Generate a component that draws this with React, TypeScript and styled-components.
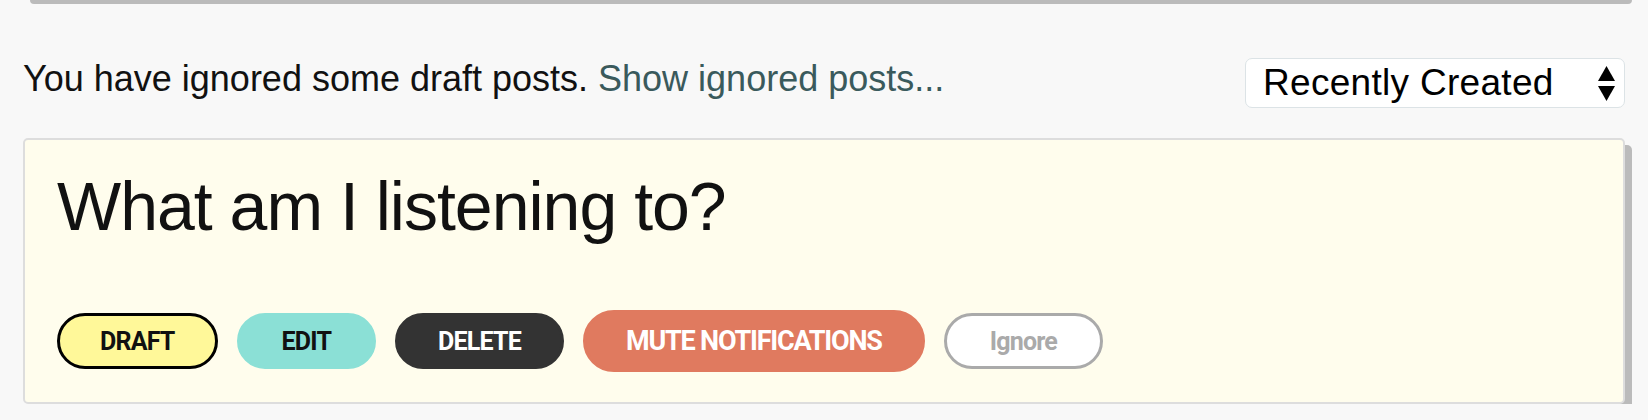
import React from "react";
import styled, { createGlobalStyle } from "styled-components";

const GlobalStyle = createGlobalStyle`
  html, body {
    margin: 0;
    padding: 0;
    background: #f8f8f8;
    font-family: "Liberation Sans", Arial, sans-serif;
    color: #111;
  }
`;

type Variant = "draft" | "edit" | "delete" | "mute" | "ignore";

interface Action {
  label: string;
  variant: Variant;
}

const actions: Action[] = [
  { label: "DRAFT", variant: "draft" },
  { label: "EDIT", variant: "edit" },
  { label: "DELETE", variant: "delete" },
  { label: "MUTE NOTIFICATIONS", variant: "mute" },
  { label: "Ignore", variant: "ignore" },
];

const App: React.FC = () => {
  return (
    <Page>
      <GlobalStyle />
      <PrevCardEdge />
      <Header>
        <Notice>
          You have ignored some draft posts. <NoticeLink href="#">Show ignored posts...</NoticeLink>
        </Notice>
        <SortSelect>
          <span>Recently Created</span>
          <svg width="17" height="35" viewBox="0 0 17 35">
            <polygon points="8.5,0 17,15 0,15" fill="#000" />
            <polygon points="0,20 17,20 8.5,35" fill="#000" />
          </svg>
        </SortSelect>
      </Header>
      <Card>
        <Title>What am I listening to?</Title>
        <ActionRow>
          {actions.map((a) => (
            <PillButton key={a.label} variant={a.variant}>
              {a.label}
            </PillButton>
          ))}
        </ActionRow>
      </Card>
    </Page>
  );
};

export default App;

const Page = styled.div`
  display: flex;
  flex-direction: column;
  padding: 0 23px;
`;

const PrevCardEdge = styled.div`
  height: 4px;
  margin: 0 -7px 0 7px;
  background: #bbb;
  border-radius: 0 0 4px 4px;
`;

const Header = styled.div`
  display: flex;
  justify-content: space-between;
  align-items: center;
  margin-top: 54px;
  margin-bottom: 30px;
`;

const Notice = styled.div`
  font-size: 36px;
  line-height: 42px;
  margin-top: -8px;
`;

const NoticeLink = styled.a`
  color: #3a5a5c;
  text-decoration: none;
`;

const SortSelect = styled.div`
  display: flex;
  align-items: center;
  justify-content: space-between;
  box-sizing: border-box;
  width: 380px;
  height: 50px;
  padding: 0 9px 0 17px;
  background: #fff;
  border: 1px solid #dce3e6;
  border-radius: 7px;
  font-size: 37px;
  letter-spacing: 0.3px;
  color: #000;
`;

const Card = styled.div`
  background: #fffded;
  border: 2px solid #ddd;
  border-radius: 5px;
  box-shadow: 7px 7px 0 #bbb;
  padding: 32px 32px 30px;
`;

const Title = styled.h1`
  margin: 0 0 70px;
  font-size: 68px;
  line-height: 68px;
  font-weight: 400;
  letter-spacing: -1px;
  color: #111;
`;

const ActionRow = styled.div`
  display: flex;
  align-items: center;
  gap: 19px;
`;

const variantStyles: Record<Variant, string> = {
  draft: "background:#fff899;color:#111;border:3px solid #000;",
  edit: "background:#8be0d6;color:#111;border:3px solid #8be0d6;padding:0 42px;",
  delete: "background:#333;color:#fff;border:3px solid #333;",
  mute: "background:#e07a5f;color:#fff;border:3px solid #e07a5f;height:62px;font-size:27px;letter-spacing:-1.2px;padding:0 40px;",
  ignore: "background:#fff;color:#aaa;border:3px solid #aaa;padding:0 43px;",
};

const PillButton = styled.button<{ variant: Variant }>`
  box-sizing: border-box;
  height: 56px;
  padding: 0 40px;
  border-radius: 32px;
  font-family: Roboto, "Liberation Sans", sans-serif;
  font-weight: 700;
  font-size: 25px;
  letter-spacing: -0.8px;
  cursor: pointer;
  ${({ variant }) => variantStyles[variant]}
`;
